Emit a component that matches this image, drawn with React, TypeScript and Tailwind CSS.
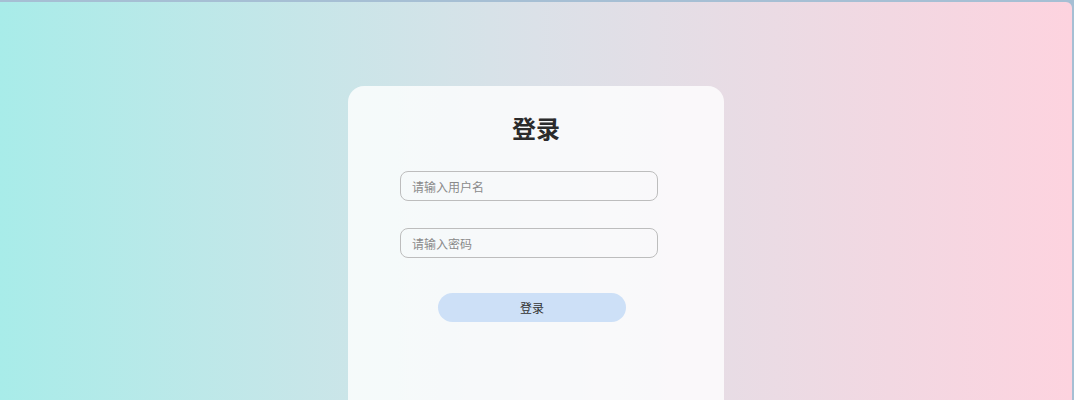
export default function App() {
  return (
    <div className="w-[1074px] h-[400px] overflow-hidden bg-[#a6bfd4] pt-[2px] pr-[2px]" style={{ fontFamily: '"Noto Sans CJK SC", "Noto Sans", sans-serif' }}>
      <div className="h-[398px] w-[1072px] rounded-tr-[6px] bg-gradient-to-r from-[#a8ece9] via-[#dbe1e8] to-[#fdd3df] pt-[84px] overflow-hidden">
        <div className="mx-auto w-[376px] h-[360px] rounded-[16px] bg-white/80 pt-[24px] pl-[52px]">
          <h1 className="w-[272px] text-center text-[24px] leading-[36px] font-bold text-[#2b2b2b]">登录</h1>
          <div className="mt-[25px] flex flex-col">
            <input
              className="w-[258px] h-[30px] rounded-[8px] border border-[#bdbdbd] bg-transparent px-[11px] text-[12px] text-[#333] placeholder:text-[#8a8a8a] outline-none"
              placeholder="请输入用户名"
            />
            <input
              className="mt-[27px] w-[258px] h-[30px] rounded-[8px] border border-[#bdbdbd] bg-transparent px-[11px] text-[12px] text-[#333] placeholder:text-[#8a8a8a] outline-none"
              placeholder="请输入密码"
            />
            <button className="mt-[35px] ml-[38px] w-[188px] h-[29px] rounded-full bg-[#cde0f7] text-[12px] text-[#333]">登录</button>
          </div>
        </div>
      </div>
    </div>
  );
}
